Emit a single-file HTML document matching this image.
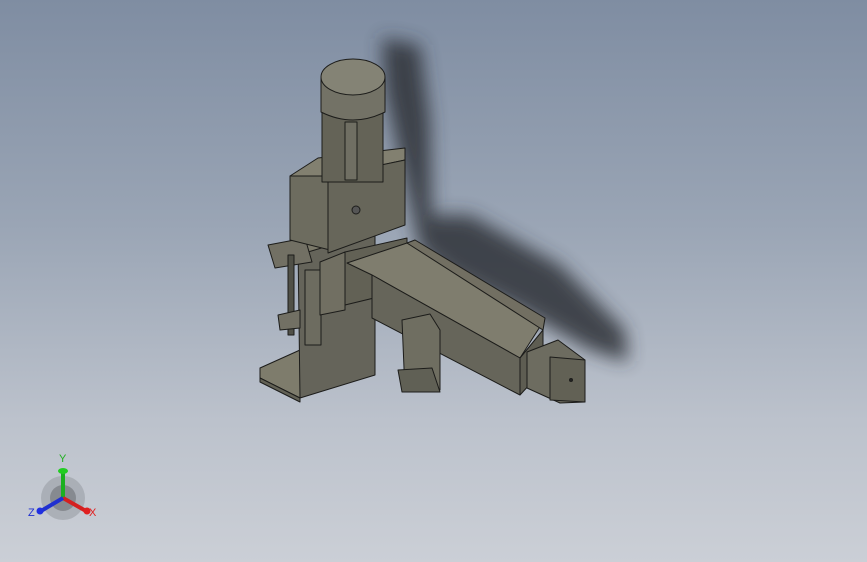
<!DOCTYPE html>
<html><head><style>
html,body{margin:0;padding:0}
body{width:867px;height:562px;overflow:hidden;background:linear-gradient(180deg,#7f8da2 0%,#9aa5b5 40%,#bcc2cc 75%,#cbcfd6 100%);font-family:"Liberation Sans",sans-serif}
svg{position:absolute;left:0;top:0}
</style></head><body>
<svg width="867" height="562" viewBox="0 0 867 562">
<defs>
<filter id="b" x="-20%" y="-20%" width="140%" height="140%"><feGaussianBlur stdDeviation="9"/></filter>
</defs>
<g filter="url(#b)" opacity="0.85">
<polygon fill="#2e3238" points="382,38 420,45 430,120 432,215 470,215 560,265 625,330 628,362 590,350 520,310 450,275 420,250 400,160 385,90"/>
</g>
<g stroke="#1c1c1a" stroke-width="1" stroke-linejoin="round">
<polygon fill="#7e7c6c" points="260,368 300,350 300,398 260,378"/>
<polygon fill="#626155" points="260,378 300,398 300,402 260,382"/>
<polygon fill="#65645a" points="298,245 375,222 375,375 300,398"/>
<polygon fill="#7a7869" points="298,245 375,222 375,232 298,255"/>
<rect x="305" y="270" width="16" height="75" fill="#6d6c60"/>
<polygon fill="#727064" points="268,245 305,238 312,262 275,268"/>
<rect x="288" y="255" width="6" height="80" fill="#505047"/>
<polygon fill="#727064" points="278,315 300,310 300,328 280,330"/>
<polygon fill="#828070" points="290,176 318,158 405,148 405,160 330,176"/>
<polygon fill="#6d6c5f" points="290,176 330,176 330,250 290,240"/>
<polygon fill="#67665a" points="328,176 405,160 405,225 328,253"/>
<circle cx="356" cy="210" r="4" fill="#555"/>
<rect x="322" y="112" width="61" height="70" fill="#646357"/>
<rect x="345" y="122" width="12" height="58" fill="#706f63"/>
<path d="M321,78 L321,112 Q353,128 385,112 L385,78 Z" fill="#737266"/>
<ellipse cx="353" cy="77" rx="32" ry="18" fill="#848375"/>
<polygon fill="#716f62" points="320,262 345,252 345,310 320,315"/>
<polygon fill="#626155" points="345,252 407,238 407,290 345,305"/>
<!-- slide top -->
<polygon fill="#7f7d6e" points="347,263 407,243 543,322 520,358 372,275"/>
<polygon fill="#726f62" points="407,243 415,240 545,318 543,330"/>
<!-- slide front -->
<polygon fill="#66655a" points="372,275 520,358 520,395 372,318"/>
<polygon fill="#5e5d52" points="520,358 543,330 543,370 520,395"/>
<!-- carriage -->
<polygon fill="#6f6e61" points="402,320 430,314 440,330 440,390 405,392"/>
<polygon fill="#606055" points="398,370 432,368 440,392 402,392"/>
<!-- stepper -->
<polygon fill="#6d6c60" points="527,352 558,340 585,360 585,402 560,403 527,388"/>
<polygon fill="#626155" points="550,357 585,360 585,402 550,400"/>
<circle cx="571" cy="380" r="1.5" fill="#222"/>
</g>
<circle cx="63" cy="498" r="22" fill="#9a9ea5" opacity="0.6"/>
<circle cx="63" cy="498" r="13" fill="#6e7277" opacity="0.6"/>
<line x1="63" y1="498" x2="63" y2="472" stroke="#1bb020" stroke-width="4"/>
<ellipse cx="63" cy="471" rx="5" ry="3" fill="#22cc22"/>
<line x1="63" y1="498" x2="86" y2="511" stroke="#d42020" stroke-width="4"/>
<circle cx="87" cy="511" r="3.5" fill="#e02020"/>
<line x1="63" y1="498" x2="41" y2="511" stroke="#2030d0" stroke-width="4"/>
<circle cx="40" cy="511" r="3.5" fill="#2030e0"/>
<text x="59" y="462" font-size="11" fill="#1fb01f">Y</text>
<text x="89" y="516" font-size="11" fill="#e02020">X</text>
<text x="28" y="516" font-size="11" fill="#2030d0">Z</text>
</svg>
</body></html>
